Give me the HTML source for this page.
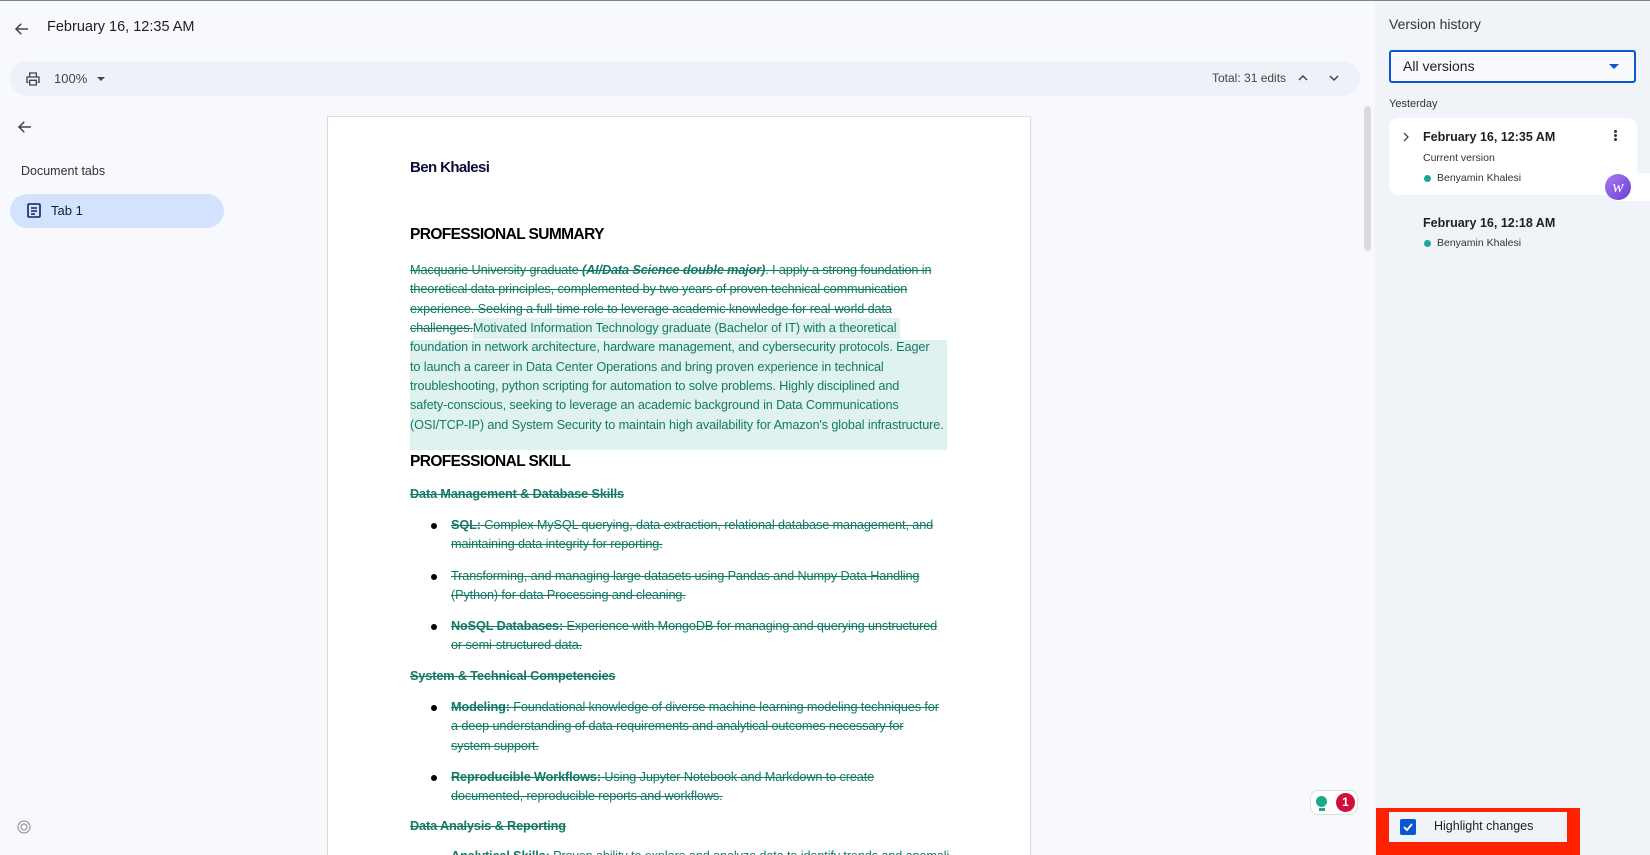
<!DOCTYPE html>
<html><head><meta charset="utf-8"><style>
*{margin:0;padding:0;box-sizing:border-box}
html,body{width:1650px;height:855px;overflow:hidden}
body{background:#f8f9fc;font-family:"Liberation Sans",sans-serif;color:#1f1f1f}
#w{position:relative;width:1650px;height:855px;overflow:hidden}
.a{position:absolute}
.topline{left:0;top:0;width:1650px;height:1px;background:#7a8590}
.doc{left:327px;top:116px;width:704px;height:739px;background:#fff;border:1px solid #dadce0;border-bottom:none}
.t{position:absolute;left:410px;white-space:nowrap;font-size:12.7px;color:#137a63;letter-spacing:-0.12px}
.s{text-decoration:line-through}
.h{position:absolute;left:410px;font-weight:bold;color:#000;font-size:15.5px;letter-spacing:-0.6px}
.hl{background:#e0f2f0}
.bul{position:absolute;left:431px;width:6px;height:6px;border-radius:50%;background:#000}
.sub{font-weight:bold}
</style></head><body><div id="w">
<div class="a topline"></div>
<svg class="a" style="left:13px;top:20px" width="18" height="18" viewBox="0 0 24 24"><path d="M20 12H5M11 5l-7 7 7 7" fill="none" stroke="#444" stroke-width="2"/></svg>
<div class="a" style="left:47px;top:19px;font-size:14.5px;color:#1f1f1f;font-weight:500">February 16, 12:35 AM</div>
<div class="a" style="left:10px;top:61px;width:1350px;height:35px;border-radius:18px;background:#eef1f7"></div>
<svg class="a" style="left:25px;top:71px" width="16" height="16" viewBox="0 0 24 24"><path d="M7 8V3h10v5M5 17H3v-8h18v8h-2M7 14h10v7H7z" fill="none" stroke="#444" stroke-width="2"/></svg>
<div class="a" style="left:54px;top:71px;font-size:13px;color:#444">100%</div>
<div class="a" style="left:97px;top:77px;border:4px solid transparent;border-top:4px solid #444"></div>
<div class="a" style="left:1212px;top:71px;font-size:12px;color:#444">Total: 31 edits</div>
<svg class="a" style="left:1297px;top:72px" width="12" height="12" viewBox="0 0 12 12"><path d="M2 8l4-4 4 4" fill="none" stroke="#444" stroke-width="1.5"/></svg>
<svg class="a" style="left:1328px;top:72px" width="12" height="12" viewBox="0 0 12 12"><path d="M2 4l4 4 4-4" fill="none" stroke="#444" stroke-width="1.5"/></svg>
<svg class="a" style="left:16px;top:118px" width="18" height="18" viewBox="0 0 24 24"><path d="M20 12H5M11 5l-7 7 7 7" fill="none" stroke="#444" stroke-width="2"/></svg>
<div class="a" style="left:21px;top:164px;font-size:12.5px;color:#333">Document tabs</div>
<div class="a" style="left:10px;top:194px;width:214px;height:34px;border-radius:17px;background:#d3e3fd"></div>
<svg class="a" style="left:27px;top:203px" width="14" height="15" viewBox="0 0 14 15"><rect x="1" y="1" width="12" height="13" rx="1" fill="none" stroke="#0b2a5a" stroke-width="1.6"/><path d="M4 5h6M4 8h6M4 11h4" stroke="#0b2a5a" stroke-width="1.4"/></svg>
<div class="a" style="left:51px;top:203px;font-size:13px;color:#0b1f44">Tab 1</div>
<svg class="a" style="left:16px;top:819px" width="16" height="16" viewBox="0 0 16 16"><circle cx="8" cy="8" r="6" fill="none" stroke="#888" stroke-width="1"/><circle cx="8" cy="8" r="3" fill="none" stroke="#888" stroke-width="1"/></svg>

<div class="a doc"></div>
<div class="a" style="left:1364px;top:106px;width:7px;height:145px;border-radius:4px;background:#dadce0"></div>
<div class="h" style="top:159px;color:#0d0d3d;font-size:15px">Ben Khalesi</div>
<div class="h" style="top:226px">PROFESSIONAL SUMMARY</div>
<div class="a hl" style="left:410px;top:340px;width:537px;height:110px"></div>
<div class="t s" style="top:263px">Macquarie University graduate <b><i>(AI/Data Science double major)</i></b>. I apply a strong foundation in</div>
<div class="t s" style="top:282px">theoretical data principles, complemented by two years of proven technical communication</div>
<div class="t s" style="top:302px">experience. Seeking a full-time role to leverage academic knowledge for real-world data</div>
<div class="t" style="top:321px"><span class="s">challenges.</span><span class="hl" style="padding:3px 4px 4px 0">Motivated Information Technology graduate (Bachelor of IT) with a theoretical</span></div>
<div class="t" style="top:340px">foundation in network architecture, hardware management, and cybersecurity protocols. Eager</div>
<div class="t" style="top:360px">to launch a career in Data Center Operations and bring proven experience in technical</div>
<div class="t" style="top:379px">troubleshooting, python scripting for automation to solve problems. Highly disciplined and</div>
<div class="t" style="top:398px">safety-conscious, seeking to leverage an academic background in Data Communications</div>
<div class="t" style="top:418px">(OSI/TCP-IP) and System Security to maintain high availability for Amazon's global infrastructure.</div>
<div class="h" style="top:453px">PROFESSIONAL SKILL</div>
<div class="t s sub" style="top:487px">Data Management &amp; Database Skills</div>
<div class="bul" style="top:523px"></div>
<div class="t s" style="top:518px;left:451px"><b>SQL:</b> Complex MySQL querying, data extraction, relational database management, and</div>
<div class="t s" style="top:537px;left:451px">maintaining data integrity for reporting.</div>
<div class="bul" style="top:574px"></div>
<div class="t s" style="top:569px;left:451px">Transforming, and managing large datasets using Pandas and Numpy Data Handling</div>
<div class="t s" style="top:588px;left:451px">(Python) for data Processing and cleaning.</div>
<div class="bul" style="top:624px"></div>
<div class="t s" style="top:619px;left:451px"><b>NoSQL Databases:</b> Experience with MongoDB for managing and querying unstructured</div>
<div class="t s" style="top:638px;left:451px">or semi-structured data.</div>
<div class="t s sub" style="top:669px">System &amp; Technical Competencies</div>
<div class="bul" style="top:705px"></div>
<div class="t s" style="top:700px;left:451px"><b>Modeling:</b> Foundational knowledge of diverse machine learning modeling techniques for</div>
<div class="t s" style="top:719px;left:451px">a deep understanding of data requirements and analytical outcomes necessary for</div>
<div class="t s" style="top:739px;left:451px">system support.</div>
<div class="bul" style="top:775px"></div>
<div class="t s" style="top:770px;left:451px"><b>Reproducible Workflows:</b> Using Jupyter Notebook and Markdown to create</div>
<div class="t s" style="top:789px;left:451px">documented, reproducible reports and workflows.</div>
<div class="t s sub" style="top:819px">Data Analysis &amp; Reporting</div>
<div class="a" style="left:410px;top:849px;width:540px;height:6px;overflow:hidden"><div class="t s" style="top:0;left:41px;"><b>Analytical Skills:</b> Proven ability to explore and analyze data to identify trends and anomalies</div></div>

<div class="a" style="left:1310px;top:790px;width:48px;height:25px;border-radius:8px;background:#fff;border:1px solid #ddd"></div>
<div class="a" style="left:1316px;top:796px;width:11px;height:11px;border-radius:50%;background:#1aa88a"></div>
<div class="a" style="left:1319px;top:808px;width:6px;height:3px;background:#1aa88a"></div>
<div class="a" style="left:1336px;top:793px;width:19px;height:19px;border-radius:50%;background:#d0103a;color:#fff;font-size:12px;font-weight:bold;text-align:center;line-height:19px">1</div>

<div class="a" style="left:1375px;top:1px;width:275px;height:854px;background:#f0f3f8"></div>
<div class="a" style="left:1389px;top:16px;font-size:14px;color:#333">Version history</div>
<div class="a" style="left:1389px;top:50px;width:247px;height:33px;border:2px solid #0b57d0;border-radius:3px;background:#f8fafd"></div>
<div class="a" style="left:1403px;top:58px;font-size:14px;color:#1f1f1f">All versions</div>
<div class="a" style="left:1609px;top:64px;border:5px solid transparent;border-top:5px solid #0b57d0"></div>
<div class="a" style="left:1389px;top:98px;font-size:11px;color:#333">Yesterday</div>
<div class="a" style="left:1389px;top:118px;width:248px;height:77px;border-radius:9px;background:#fff"></div>
<svg class="a" style="left:1401px;top:132px" width="10" height="10" viewBox="0 0 10 10"><path d="M3 1l4 4-4 4" fill="none" stroke="#444" stroke-width="1.3"/></svg>
<div class="a" style="left:1423px;top:130px;font-size:12.5px;color:#1f1f1f;font-weight:600">February 16, 12:35 AM</div>
<div class="a" style="left:1614px;top:130px;width:3px;height:3px;border-radius:50%;background:#333;box-shadow:0 4px 0 #333,0 8px 0 #333"></div>
<div class="a" style="left:1423px;top:152px;font-size:10.5px;color:#333">Current version</div>
<div class="a" style="left:1424px;top:175px;width:7px;height:7px;border-radius:50%;background:#1aa890"></div>
<div class="a" style="left:1437px;top:172px;font-size:10.5px;color:#333">Benyamin Khalesi</div>
<div class="a" style="left:1423px;top:216px;font-size:12.5px;color:#1f1f1f;font-weight:600">February 16, 12:18 AM</div>
<div class="a" style="left:1424px;top:240px;width:7px;height:7px;border-radius:50%;background:#1aa890"></div>
<div class="a" style="left:1437px;top:237px;font-size:10.5px;color:#333">Benyamin Khalesi</div>
<div class="a" style="left:1612px;top:173px;width:38px;height:28px;border-radius:6px 0 0 6px;background:#fff"></div>
<div class="a" style="left:1605px;top:174px;width:26px;height:26px;border-radius:50%;background:linear-gradient(135deg,#a77bf3,#6a3fd4);color:#fff;font-style:italic;font-size:17px;font-family:'Liberation Serif',serif;text-align:center;line-height:25px">w</div>

<div class="a" style="left:1376px;top:808px;width:204px;height:47px;background:#ff2200"></div>
<div class="a" style="left:1389px;top:812px;width:178px;height:30px;background:#f0f3f8"></div>
<div class="a" style="left:1400px;top:819px;width:16px;height:16px;border-radius:2px;background:#0b57d0"></div>
<svg class="a" style="left:1402px;top:821px" width="12" height="12" viewBox="0 0 12 12"><path d="M2 6l3 3 5-6" fill="none" stroke="#fff" stroke-width="1.8"/></svg>
<div class="a" style="left:1434px;top:819px;font-size:12.5px;color:#1f1f1f">Highlight changes</div>
</div></body></html>
